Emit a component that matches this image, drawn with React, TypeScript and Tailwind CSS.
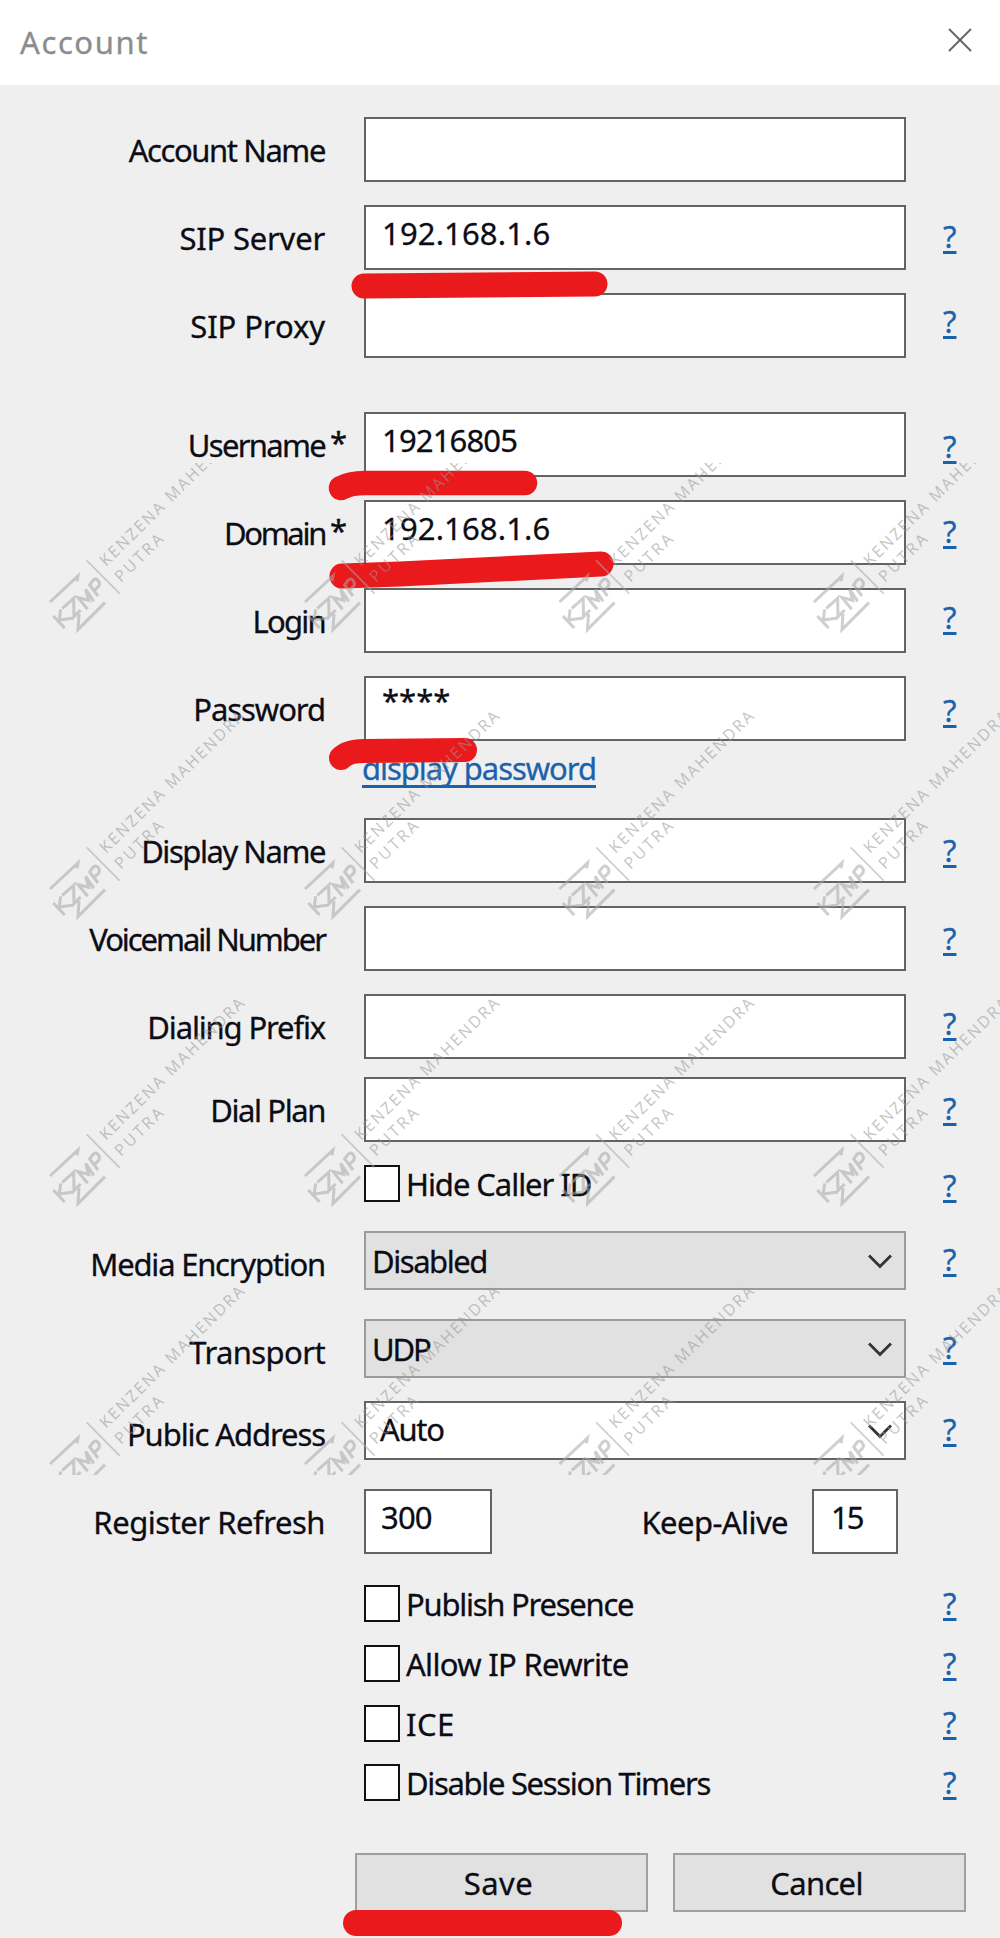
import type { ReactNode } from "react";
import { X } from "lucide-react";

type HelpProps = { className: string };

function Help({ className }: HelpProps) {
  return (
    <a
      className={`ml-[37px] h-[34px] leading-[34px] text-[#1b62ad] underline decoration-[2.5px] underline-offset-[3px] ${className}`}
    >
      ?
    </a>
  );
}

type FieldProps = {
  label: string;
  track: string;
  gap: string;
  value?: ReactNode;
  valueTrack?: string;
  star?: boolean;
  help?: string;
};

function Label({ text, track, star }: { text: string; track: string; star?: boolean }) {
  return (
    <div className="flex h-[65px] w-[364px] shrink-0 leading-[66px] whitespace-nowrap">
      <span className={`w-[325px] text-right ${track}`}>{text}</span>
      {star && <span className="-mt-[3px] pl-[5px]">*</span>}
    </div>
  );
}

function Field({ label, track, gap, value, valueTrack = "", star, help }: FieldProps) {
  return (
    <div className={`flex h-[65px] items-start ${gap}`}>
      <Label text={label} track={track} star={star} />
      <div
        className={`h-[65px] w-[542px] border-2 border-[#636363] bg-white pl-[16px] leading-[52px] ${valueTrack}`}
      >
        {value}
      </div>
      {help && <Help className={help} />}
    </div>
  );
}

type SelectProps = {
  label: string;
  track: string;
  gap: string;
  value: string;
  box: string;
};

function Select({ label, track, gap, value, box }: SelectProps) {
  return (
    <div className={`flex h-[59px] items-start ${gap}`}>
      <Label text={label} track={track} />
      <div className={`flex h-[59px] w-[542px] justify-between border-2 pr-[11px] ${box}`}>
        <span>{value}</span>
        <svg className="mt-[20px] h-[17px] w-[26px]" viewBox="0 0 26 17" fill="none">
          <path d="M2 2.5 L13 13.5 L24 2.5" stroke="#333" strokeWidth="2.8" />
        </svg>
      </div>
      <Help className="mt-[11px]" />
    </div>
  );
}

type CheckProps = { label: string; track: string; gap: string; help: string };

function Check({ label, track, gap, help }: CheckProps) {
  return (
    <div className={`flex h-[37px] items-start pl-[364px] ${gap}`}>
      <div className="flex w-[542px] leading-[39px]">
        <span className="h-[37px] w-[36px] shrink-0 border-[2.5px] border-[#111] bg-white" />
        <span className={`pl-[6px] ${track}`}>{label}</span>
      </div>
      <Help className={help} />
    </div>
  );
}

function Mark({ x, y }: { x: number; y: number }) {
  return (
    <g transform={`translate(${x} ${y})`}>
      <g transform="scale(0.3333)" fill="none" stroke="#a8a8a8" strokeWidth="9">
        <path d="M30 138 L114 60 L111 76" />
        <path d="M40 180 L74 216 M57 197 L62 160 M58 192 L101 186" />
        <path d="M67 157 L101 127 L102 182 L122 162" />
        <path d="M117 174 L114 221 L195 140" />
        <path d="M143 160 L114 125 L146 133 L137 100 L161 136" />
        <path d="M174 120 L149 87 L159 73 Q168 64 176 76 Q182 87 172 95 L162 104" />
        <path d="M140 13 L239 113" strokeWidth="5" />
      </g>
      <g fill="#969696" fontSize="16" className="font-['Open_Sans']">
        <text transform="translate(66 11) rotate(-44.4)" textLength="195">
          KENZENA MAHENDRA
        </text>
        <text transform="translate(81 27) rotate(-44.4)" textLength="61">
          PUTRA
        </text>
      </g>
    </g>
  );
}

const columns = [40, 295, 549.5, 804];
const rows = [93, 380, 667, 955];

function Watermarks() {
  return (
    <svg
      className="pointer-events-none absolute top-[463px] left-0 h-[1012px] w-[1000px] opacity-55"
      viewBox="0 0 1000 1012"
    >
      {rows.map((y) => columns.map((x) => <Mark key={`${x}-${y}`} x={x} y={y} />))}
    </svg>
  );
}

function Highlights() {
  return (
    <svg
      className="pointer-events-none absolute top-0 left-0 h-[1938px] w-[1000px]"
      viewBox="0 0 1000 1938"
      fill="none"
      stroke="#ea191c"
      strokeLinecap="round"
      strokeLinejoin="round"
    >
      <path d="M364 286 L595 284" strokeWidth="25" />
      <path d="M341 488 Q350 483 365 483 L525 483" strokeWidth="24.5" />
      <path d="M342 576 L400 574 L601 564" strokeWidth="25" />
      <path d="M341 758 Q348 751 364 751 L465 750" strokeWidth="24" />
      <path d="M356 1923 L609 1923" strokeWidth="26" />
    </svg>
  );
}

export default function App() {
  return (
    <div className="relative h-[1938px] w-[1000px] overflow-hidden bg-[#efefef] font-['Noto_Sans',sans-serif] text-[31px] text-[#0c0c14] [-webkit-text-stroke:0.3px]">
      <header className="flex h-[85px] items-center justify-between bg-white pr-[19px] pl-[20px] leading-[85px] text-[#8c8c8c]">
        <span className="tracking-[1.6px]">Account</span>
        <X className="-mt-[5px] h-[42px] w-[42px]" strokeWidth={1.1} color="#666" />
      </header>

      <main>
        <Field label="Account Name" track="tracking-[-1.42px]" gap="mt-[32px]" />
        <Field
          label="SIP Server"
          track="tracking-[-0.22px]"
          gap="mt-[23px]"
          value="192.168.1.6"
          valueTrack="tracking-[0.15px]"
          help="mt-[14px]"
        />
        <Field label="SIP Proxy" track="tracking-[-0.1px]" gap="mt-[23px]" help="mt-[11px]" />
        <Field
          label="Username"
          track="tracking-[-1.7px]"
          gap="mt-[54px]"
          value="19216805"
          valueTrack="tracking-[-0.85px]"
          star
          help="mt-[17px]"
        />
        <Field
          label="Domain"
          track="tracking-[-2.3px]"
          gap="mt-[23px]"
          value="192.168.1.6"
          valueTrack="tracking-[0.15px]"
          star
          help="mt-[14px]"
        />
        <Field label="Login" track="tracking-[-1.75px]" gap="mt-[23px]" help="mt-[12px]" />
        <Field
          label="Password"
          track="tracking-[-1.06px]"
          gap="mt-[23px]"
          value={<span className="-mt-[4px] block">****</span>}
          help="mt-[17px]"
        />
        <div className="h-[54px] pl-[362px] leading-[55px]">
          <a className="tracking-[-1.05px] text-[#1b62ad] underline decoration-[2.5px] underline-offset-[5px] [text-decoration-skip-ink:none]">
            display password
          </a>
        </div>
        <Field label="Display Name" track="tracking-[-1.45px]" gap="mt-[23px]" help="mt-[15px]" />
        <Field label="Voicemail Number" track="tracking-[-2.05px]" gap="mt-[23px]" help="mt-[15px]" />
        <Field label="Dialing Prefix" track="tracking-[-1.15px]" gap="mt-[23px]" help="mt-[12px]" />
        <Field label="Dial Plan" track="tracking-[-1.4px]" gap="mt-[18px]" help="mt-[14px]" />
        <Check label="Hide Caller ID" track="tracking-[-1.05px]" gap="mt-[23px]" help="mt-[3px]" />
        <Select
          label="Media Encryption"
          track="tracking-[-1.22px]"
          gap="mt-[29px]"
          value="Disabled"
          box="border-[#9b9b9b] bg-[#e1e1e1] pl-[6px] leading-[57px] tracking-[-1.45px]"
        />
        <Select
          label="Transport"
          track="tracking-[-0.6px]"
          gap="mt-[29px]"
          value="UDP"
          box="border-[#9b9b9b] bg-[#e1e1e1] pl-[6px] leading-[57px] tracking-[-2.1px]"
        />
        <Select
          label="Public Address"
          track="tracking-[-1.08px]"
          gap="mt-[23px]"
          value="Auto"
          box="border-[#636363] bg-white pl-[14px] leading-[52px] tracking-[-1.3px]"
        />
        <div className="mt-[29px] flex h-[65px] items-start leading-[66px]">
          <Label text="Register Refresh" track="tracking-[-0.48px]" />
          <div className="h-[65px] w-[128px] border-2 border-[#636363] bg-white pl-[15px] leading-[52px] tracking-[-0.8px]">
            300
          </div>
          <span className="w-[320px] pr-[24px] text-right tracking-[-0.57px]">Keep-Alive</span>
          <div className="h-[65px] w-[86px] border-2 border-[#636363] bg-white pl-[17px] leading-[52px] tracking-[-2px]">
            15
          </div>
        </div>
        <Check label="Publish Presence" track="tracking-[-1.25px]" gap="mt-[31px]" help="mt-[1px]" />
        <Check label="Allow IP Rewrite" track="tracking-[-0.7px]" gap="mt-[23px]" help="mt-[1px]" />
        <Check label="ICE" track="tracking-[0.4px]" gap="mt-[23px]" help="mt-0" />
        <Check
          label="Disable Session Timers"
          track="tracking-[-1.32px]"
          gap="mt-[22px]"
          help="mt-[1px]"
        />
      </main>

      <footer className="mt-[52px] flex gap-[25px] pl-[355px]">
        <button className="h-[59px] w-[293px] border-2 border-[#9f9f9f] bg-[#e1e1e1] pr-[6px] leading-[56px] tracking-[0.5px]">
          Save
        </button>
        <button className="h-[59px] w-[293px] border-2 border-[#9f9f9f] bg-[#e1e1e1] pr-[6px] leading-[56px] tracking-[-0.67px]">
          Cancel
        </button>
      </footer>

      <Highlights />
      <Watermarks />
    </div>
  );
}
